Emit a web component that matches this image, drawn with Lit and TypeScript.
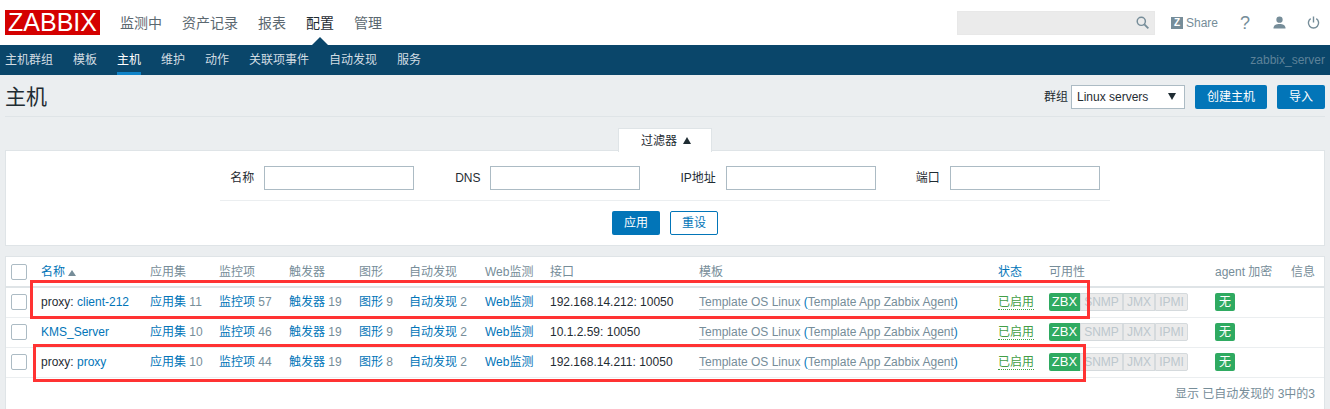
import { LitElement, html, css } from "lit";
import { customElement } from "lit/decorators.js";

const rows = [
  { pre: "proxy: ", name: "client-212", app: 11, item: 57, trig: 19, graph: 9, ip: "192.168.14.212: 10050" },
  { pre: "", name: "KMS_Server", app: 10, item: 46, trig: 19, graph: 9, ip: "10.1.2.59: 10050" },
  { pre: "proxy: ", name: "proxy", app: 10, item: 44, trig: 19, graph: 8, ip: "192.168.14.211: 10050" },
];

@customElement("app-root")
export class AppRoot extends LitElement {
  static styles = css`
    :host { display: block; position: relative; width: 1330px; height: 409px; overflow: hidden; background: #ebeef0;
      font: 12px/14px "Liberation Sans", "Noto Sans CJK SC", sans-serif; color: #1f2c33; }
    a { color: #0275b8; text-decoration: none; }
    .top { height: 45px; background: #fff; display: flex; align-items: center; padding: 0 8px 0 5px; box-sizing: border-box; position: relative; }
    .logo { width: 95px; height: 25px; background: #d40000; color: #fff; font-size: 25px; line-height: 25px; text-align: center; }
    .mainnav { display: flex; gap: 20px; margin-left: 20px; font-size: 14px; color: #5b6870; }
    .mainnav .on { color: #1f2c33; }
    .caret { position: absolute; left: 312px; top: 37px; width: 0; height: 0; border-left: 8px solid transparent; border-right: 8px solid transparent; border-bottom: 8px solid #0a466a; }
    .tools { margin-left: auto; display: flex; align-items: center; }
    .search { width: 198px; height: 24px; background: #ebebeb; border: 1px solid #e8e8e8; box-sizing: border-box; display: flex; align-items: center; justify-content: flex-end; padding-right: 5px; margin-right: 16px; }
    .share { display: flex; align-items: center; gap: 3px; color: #768d99; width: 49px; }
    .zb { width: 12px; height: 12px; background: #768d99; color: #fff; font-size: 10px; font-weight: bold; line-height: 12px; text-align: center; }
    .ic { display: flex; margin-left: 16px; width: 18px; justify-content: center; color: #768d99; }
    .q { font-size: 18px; line-height: 18px; }
    .sub { height: 30px; background: #0a466a; display: flex; align-items: center; padding: 0 5px; color: #d2dde3; gap: 20px; box-sizing: border-box; }
    .sub span { height: 30px; line-height: 30px; box-sizing: border-box; }
    .sub .on { color: #fff; border-bottom: 3px solid #0f83c8; }
    .sub .srv { margin-left: auto; color: #5d8299; }
    .head { height: 42px; margin: 0 5px; padding-top: 2px; border-bottom: 1px solid #dfe4e7; display: flex; align-items: center; box-sizing: border-box; }
    h1 { font-size: 21px; line-height: 24px; font-weight: 400; margin: 0; color: #1f2c33; }
    .ctrls { margin-left: auto; display: flex; align-items: center; }
    .sel { width: 114px; height: 24px; border: 1px solid #acbbc4; background: #fff; box-sizing: border-box; margin-left: 3px; padding: 0 4px 0 5px; display: flex; justify-content: space-between; align-items: center; margin-right: 10px; }
    .down { width: 0; height: 0; border-left: 4px solid transparent; border-right: 4px solid transparent; border-top: 7px solid #1f2c33; margin-right: 4px; }
    .up { display: inline-block; width: 0; height: 0; border-left: 4.5px solid transparent; border-right: 4.5px solid transparent; border-bottom: 7px solid #1f2c33; margin-left: 6px; vertical-align: 1px; }
    .btn { background: #0275b8; color: #fff; height: 24px; line-height: 24px; padding: 0 12px; border-radius: 2px; }
    .btn.alt { background: #fff; color: #0275b8; border: 1px solid #0275b8; line-height: 22px; box-sizing: border-box; padding: 0 11px; }
    .ctrls .btn + .btn { margin-left: 10px; }
    .tabwrap { display: flex; justify-content: center; padding-top: 10px; height: 33px; box-sizing: border-box; }
    .tab { width: 94px; height: 24px; background: #fff; border: 1px solid #dfe4e7; border-bottom: 0; padding-left: 2px; text-align: center; line-height: 25px; box-sizing: border-box; position: relative; top: 1px; z-index: 1; }
    .filter { margin: 0 5px; height: 96px; background: #fff; border: 1px solid #dfe4e7; box-sizing: border-box; }
    .frow { height: 50px; margin: 0 214px 10px; border-bottom: 1px solid #ebeef0; display: flex; align-items: flex-start; justify-content: center; padding-top: 15px; box-sizing: border-box; }
    .fld { display: flex; align-items: center; gap: 10px; }
    .fld.dns { gap: 9px; }
    .frow .fld + .fld { margin-left: 41px; }
    .frow .fld.last { margin-left: 40px; }
    .inp { width: 150px; height: 24px; border: 1px solid #acbbc4; box-sizing: border-box; background: #fff; }
    .acts { display: flex; justify-content: center; gap: 10px; }
    .panel { margin: 10px 5px 0; background: #fff; border: 1px solid #dfe4e7; border-bottom: 0; height: 160px; box-sizing: border-box; }
    table { border-collapse: collapse; table-layout: fixed; width: 1318px; }
    th { font-weight: 400; color: #768d99; text-align: left; height: 30px; padding: 0; border-bottom: 2px solid #dfe4e7; vertical-align: middle; box-sizing: border-box; }
    td { height: 30px; padding: 0; border-bottom: 1px solid #ebeef0; color: #1f2c33; vertical-align: middle; box-sizing: border-box; white-space: nowrap; }
    th.lnk { color: #0275b8; }
    .cb { width: 16px; height: 16px; border: 1px solid #acbbc4; border-radius: 2px; margin-left: 5px; box-sizing: border-box; background: #fff; }
    .num { color: #768d99; }
    .sort { display: inline-block; width: 0; height: 0; border-left: 4px solid transparent; border-right: 4px solid transparent; border-bottom: 6px solid #768d99; margin-left: 3px; }
    .tpl { color: #768d99; border-bottom: 1px solid #c5ced3; display: inline-block; line-height: 14px; }
    .en { color: #429e47; border-bottom: 1px dotted #429e47; display: inline-block; line-height: 14px; }
    .avail { display: flex; height: 18px; font-size: 12px; line-height: 16px; }
    .av { background: #ebebeb; color: #bcc7cd; border: 1px solid #d5dadd; box-sizing: border-box; display: block; text-align: center; }
    .g { background: #2faa61; color: #fff; border-radius: 2px; text-align: center; height: 18px; line-height: 18px; }
    .av.z { width: 31px; border: 0; background: #2faa61; color: #fff; font-size: 13px; line-height: 18px; border-radius: 2px 0 0 2px; }
    .av.s { width: 43px; }
    .av.j { width: 32px; }
    .av.i { width: 33px; border-radius: 0 2px 2px 0; }
    .w { width: 20px; display: block; }
    .foot { text-align: right; color: #768d99; padding: 9px 9px 0 0; }
    .red { position: absolute; border: 3px solid #ff3333; box-sizing: border-box; pointer-events: none; }
    .r1 { left: 30px; top: 280px; width: 1060px; height: 39px; }
    .r2 { left: 33px; top: 344px; width: 1053px; height: 38px; }
  `;

  render() {
    const cols = [35, 109, 69, 70, 70, 50, 76, 65, 149, 299, 51, 166, 76, 33];
    return html`
      <div class="top">
        <div class="logo">ZABBIX</div>
        <div class="mainnav"><span>监测中</span><span>资产记录</span><span>报表</span><span class="on">配置</span><span>管理</span></div>
        <div class="caret"></div>
        <div class="tools">
          <div class="search"><svg width="13" height="13" viewBox="0 0 14 14" fill="none" stroke="#768d99" stroke-width="1.6"><circle cx="5.7" cy="5.7" r="4.4"/><path d="M9 9l4.300 4.300" stroke-width="2"/></svg></div>
          <div class="share"><span class="zb">Z</span><span>Share</span></div>
          <div class="ic q">?</div>
          <div class="ic"><svg width="13" height="13" viewBox="0 0 14 14" fill="#768d99"><circle cx="7" cy="4" r="3.400"/><path d="M.5 13.500c0-3.500 2.800-4.800 6.500-4.800s6.500 1.300 6.500 4.800z"/></svg></div>
          <div class="ic"><svg width="13" height="13" viewBox="0 0 14 14" fill="none" stroke="#768d99" stroke-width="1.500"><path d="M7 .5v6.500M4 2.800a5.500 5.500 0 1 0 6 0"/></svg></div>
        </div>
      </div>
      <div class="sub">
        <span>主机群组</span><span>模板</span><span class="on">主机</span><span>维护</span><span>动作</span><span>关联项事件</span><span>自动发现</span><span>服务</span>
        <span class="srv">zabbix_server</span>
      </div>
      <div class="head">
        <h1>主机</h1>
        <div class="ctrls">
          <span>群组</span>
          <div class="sel"><span>Linux servers</span><span class="down"></span></div>
          <span class="btn">创建主机</span><span class="btn">导入</span>
        </div>
      </div>
      <div class="tabwrap"><div class="tab">过滤器<span class="up"></span></div></div>
      <div class="filter">
        <div class="frow">
          <div class="fld"><span>名称</span><div class="inp"></div></div>
          <div class="fld dns"><span>DNS</span><div class="inp"></div></div>
          <div class="fld"><span>IP地址</span><div class="inp"></div></div>
          <div class="fld last"><span>端口</span><div class="inp"></div></div>
        </div>
        <div class="acts"><span class="btn">应用</span><span class="btn alt">重设</span></div>
      </div>
      <div class="panel">
        <table>
          <colgroup>${cols.map((w) => html`<col style="width:${w}px" />`)}</colgroup>
          <thead><tr>
            <th><div class="cb"></div></th>
            <th class="lnk">名称<span class="sort"></span></th>
            <th>应用集</th><th>监控项</th><th>触发器</th><th>图形</th><th>自动发现</th><th>Web监测</th>
            <th>接口</th><th>模板</th><th class="lnk">状态</th><th>可用性</th><th>agent 加密</th><th>信息</th>
          </tr></thead>
          <tbody>
            ${rows.map((r) => html`<tr>
              <td><div class="cb"></div></td>
              <td>${r.pre}<a href="#">${r.name}</a></td>
              <td><a href="#">应用集</a> <span class="num">${r.app}</span></td>
              <td><a href="#">监控项</a> <span class="num">${r.item}</span></td>
              <td><a href="#">触发器</a> <span class="num">${r.trig}</span></td>
              <td><a href="#">图形</a> <span class="num">${r.graph}</span></td>
              <td><a href="#">自动发现</a> <span class="num">2</span></td>
              <td><a href="#">Web监测</a></td>
              <td>${r.ip}</td>
              <td><span class="tpl">Template OS Linux</span> <a href="#">(</a><span class="tpl">Template App Zabbix Agent</span><a href="#">)</a></td>
              <td><span class="en">已启用</span></td>
              <td><div class="avail"><span class="av z">ZBX</span><span class="av s">SNMP</span><span class="av j">JMX</span><span class="av i">IPMI</span></div></td>
              <td><span class="g w">无</span></td>
              <td></td>
            </tr>`)}
          </tbody>
        </table>
        <div class="foot">显示 已自动发现的 3中的3</div>
      </div>
      <div class="red r1"></div>
      <div class="red r2"></div>
    `;
  }
}
